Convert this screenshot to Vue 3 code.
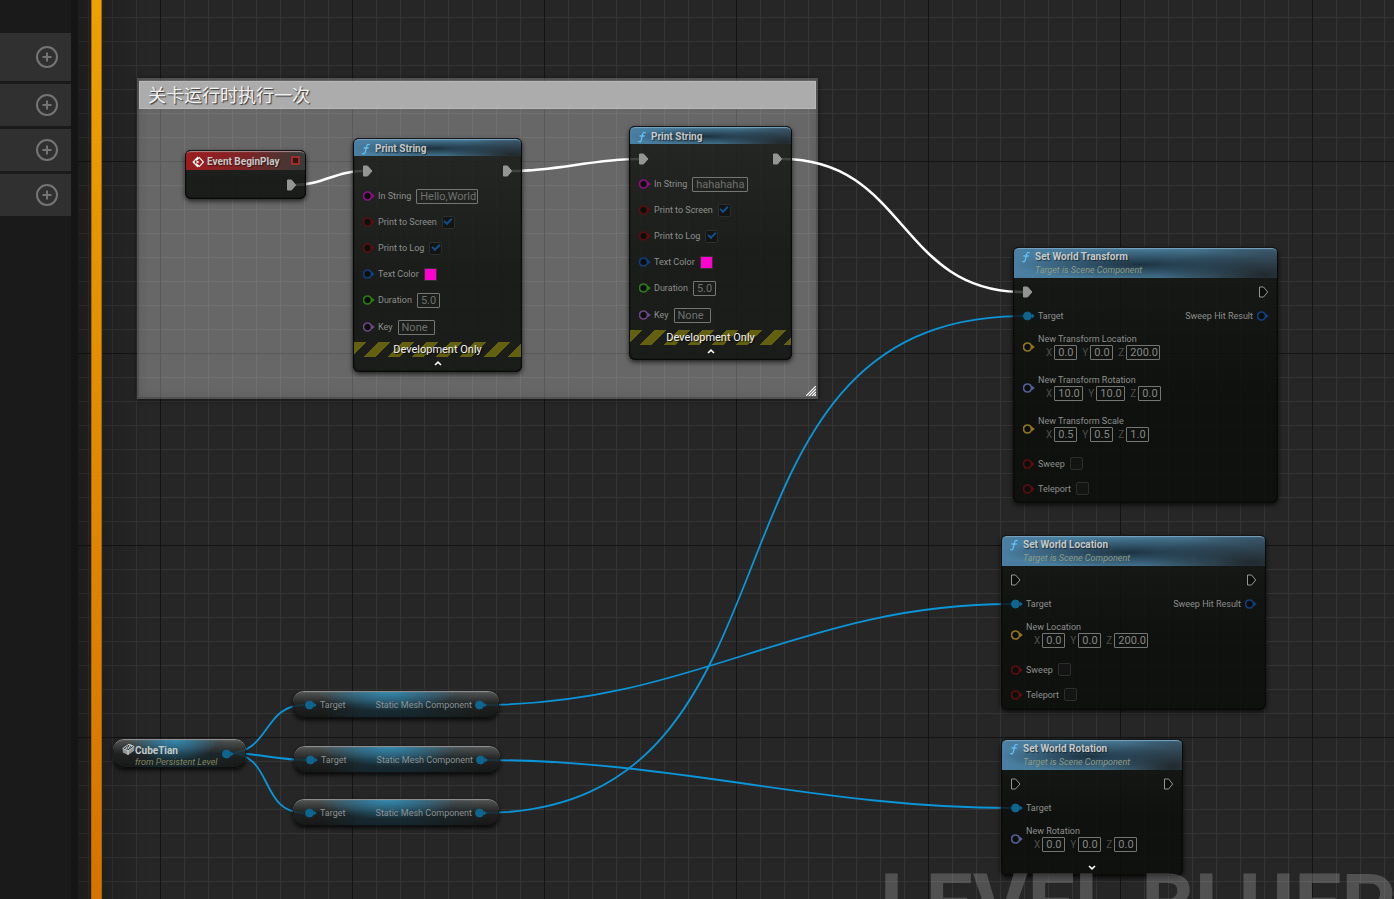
<script setup>
const wires = [
  { from: [295, 185], to: [363, 171], kind: 'exec' },
  { from: [512, 171], to: [639, 159], kind: 'exec' },
  { from: [782, 159], to: [1023, 292], kind: 'exec' },
  { from: [482, 705], to: [1011, 604], kind: 'object' },
  { from: [484, 760], to: [1011, 808], kind: 'object' },
  { from: [482, 813], to: [1023, 316], kind: 'object' },
  { from: [229, 753], to: [304, 705], kind: 'object' },
  { from: [229, 753], to: [306, 760], kind: 'object' },
  { from: [229, 753], to: [304, 813], kind: 'object' },
]

function wirePath({ from, to }) {
  const t = (Math.abs(to[0] - from[0]) + Math.abs(to[1] - from[1])) / 3
  return `M${from[0]} ${from[1]}C${from[0] + t} ${from[1]} ${to[0] - t} ${to[1]} ${to[0]} ${to[1]}`
}

const printRows = (text, width) => [
  { type: 'exec', in: 'linked', out: 'linked' },
  { type: 'text', label: 'In String', pin: 'string', value: text, width },
  { type: 'bool', label: 'Print to Screen', pin: 'bool', checked: true },
  { type: 'bool', label: 'Print to Log', pin: 'bool', checked: true },
  { type: 'color', label: 'Text Color', pin: 'struct' },
  { type: 'text', label: 'Duration', pin: 'float', value: '5.0', width: 23 },
  { type: 'text', label: 'Key', pin: 'name', value: 'None', width: 37, tall: true },
]

const vector = (label, pin, values) => ({ type: 'vector', label, pin, values })
const sweepRows = [
  { type: 'bool', label: 'Sweep', pin: 'bool' },
  { type: 'bool', label: 'Teleport', pin: 'bool' },
]

const nodes = [
  {
    id: 'begin', kind: 'event', x: 185, y: 150, w: 121, h: 49, title: 'Event BeginPlay',
    rows: [{ type: 'exec', out: 'linked' }],
  },
  {
    id: 'print1', kind: 'print', x: 353, y: 138, w: 169, h: 234, title: 'Print String',
    rows: printRows('Hello,World', 62), dev: true, caret: 'up',
  },
  {
    id: 'print2', kind: 'print', x: 629, y: 126, w: 163, h: 234, title: 'Print String',
    rows: printRows('hahahaha', 56), dev: true, caret: 'up',
  },
  {
    id: 'transform', kind: 'set', x: 1013, y: 247, w: 265, h: 256, title: 'Set World Transform',
    sub: 'Target is Scene Component',
    rows: [
      { type: 'exec', in: 'linked', out: 'open' },
      { type: 'target', label: 'Target', out: 'Sweep Hit Result' },
      vector('New Transform Location', 'vector', ['0.0', '0.0', '200.0']),
      vector('New Transform Rotation', 'rotator', ['10.0', '10.0', '0.0']),
      vector('New Transform Scale', 'vector', ['0.5', '0.5', '1.0']),
      ...sweepRows,
    ],
  },
  {
    id: 'location', kind: 'set', x: 1001, y: 535, w: 265, h: 175, title: 'Set World Location',
    sub: 'Target is Scene Component',
    rows: [
      { type: 'exec', in: 'open', out: 'open' },
      { type: 'target', label: 'Target', out: 'Sweep Hit Result' },
      vector('New Location', 'vector', ['0.0', '0.0', '200.0']),
      ...sweepRows,
    ],
  },
  {
    id: 'rotation', kind: 'set', x: 1001, y: 739, w: 182, h: 137, title: 'Set World Rotation',
    sub: 'Target is Scene Component',
    rows: [
      { type: 'exec', in: 'open', out: 'open' },
      { type: 'target', label: 'Target' },
      vector('New Rotation', 'rotator', ['0.0', '0.0', '0.0']),
    ],
    caret: 'down',
  },
]

const getters = [
  { x: 293, y: 691 },
  { x: 294, y: 746 },
  { x: 293, y: 799 },
]

const fieldWidth = (v) => ({ 3: 23, 4: 29, 5: 34 })[v.length]
const box = (n) => ({ left: n.x + 'px', top: n.y + 'px', width: n.w && n.w + 'px', minHeight: n.h && n.h + 'px' })
</script>

<template>
  <div class="editor">
    <main class="graph">
      <section class="comment" aria-label="关卡运行时执行一次">
        <h2>关卡运行时执行一次</h2>
        <svg class="grip" width="10" height="10" viewBox="0 0 10 10">
          <path d="M0 10 10 0M3 10l7-7M6 10l4-4M8.500 10 10 8.500" stroke="#fff" stroke-width="1.200" />
        </svg>
      </section>

      <svg class="wires">
        <path v-for="(w, i) in wires" :key="i" :d="wirePath(w)" :class="w.kind" />
      </svg>

      <article v-for="n in nodes" :key="n.id" class="node" :class="n.kind" :style="box(n)">
        <header>
          <svg v-if="n.kind === 'event'" class="glyph" width="12" height="12" viewBox="0 0 12 12">
            <path d="M5.600.6 7.300 2.300 5 4.500H2.800v3H5L7.300 9.700 5.600 11.400.3 6z" fill="#fff" />
            <path d="M7 1.200 11.400 6 7 10.800" fill="none" stroke="#eee" stroke-width="1.200" />
            <path d="M4.500 4.500 7.500 6l-3 1.500z" fill="#fff" />
          </svg>
          <svg v-else class="glyph" width="12" height="12" viewBox="0 0 12 12">
            <path d="M9.300 1.700C7.600.8 6.900 2 6.500 3.700L5.300 8.800C4.900 10.600 4 11.200 2.600 10.500M3.900 5h4.300" fill="none" stroke="#63bff0" stroke-width="1.300" stroke-linecap="round" />
          </svg>
          <div class="titles">
            <h3>{{ n.title }}</h3>
            <p v-if="n.sub">{{ n.sub }}</p>
          </div>
          <span v-if="n.kind === 'event'" class="delegate"></span>
        </header>

        <div class="body">
          <div v-for="(r, i) in n.rows" :key="i" class="row" :class="[r.type, { tall: r.tall }]">
            <template v-if="r.type === 'exec'">
              <svg v-if="r.in" class="pin" :class="r.in" width="12" height="12" viewBox="0 0 12 12">
                <path d="M.5 1h4L9 6 4.500 11h-4z" />
              </svg>
              <svg v-if="r.out" class="pin end" :class="r.out" width="9" height="12" viewBox="0 0 9 12">
                <path d="M.5 1h4L8.700 6 4.500 11h-4z" />
              </svg>
            </template>

            <template v-else>
              <svg class="pin" :class="r.pin || 'object'" width="12" height="12" viewBox="0 0 12 12">
                <circle cx="4.500" cy="6" r="4" />
                <path class="nub" d="M9 3.800 11.800 6 9 8.200z" />
              </svg>

              <template v-if="r.type === 'vector'">
                <fieldset>
                  <legend>{{ r.label }}</legend>
                  <div class="axes">
                    <label v-for="(v, k) in r.values" :key="k">
                      <span>{{ 'XYZ'[k] }}</span>
                      <input type="text" :value="v" :style="{ width: fieldWidth(v) + 'px' }" />
                    </label>
                  </div>
                </fieldset>
              </template>

              <template v-else-if="r.type === 'target'">
                <span>{{ r.label }}</span>
                <template v-if="r.out">
                  <span class="end">{{ r.out }}</span>
                  <svg class="pin struct" width="12" height="12" viewBox="0 0 12 12">
                    <circle cx="4.500" cy="6" r="4" />
                    <path class="nub" d="M9 3.800 11.800 6 9 8.200z" />
                  </svg>
                </template>
              </template>

              <template v-else>
                <label :for="n.id + i">{{ r.label }}</label>
                <input v-if="r.type === 'text'" :id="n.id + i" type="text" :value="r.value" :style="{ width: r.width + 'px' }" />
                <input v-else-if="r.type === 'bool'" :id="n.id + i" type="checkbox" :checked="r.checked" />
                <button v-else :id="n.id + i" type="button" class="swatch"></button>
              </template>
            </template>
          </div>
        </div>

        <p v-if="n.dev" class="dev">Development Only</p>
        <button v-if="n.caret" type="button" class="caret" :class="n.caret" aria-label="Toggle advanced pins">
          <svg width="8" height="5" viewBox="0 0 8 5">
            <path d="M1 4 4 1.200 7 4" fill="none" stroke="#fff" stroke-width="1.600" />
          </svg>
        </button>
      </article>

      <article class="pill variable" :style="box({ x: 113, y: 739 })">
        <svg class="brick" width="13" height="13" viewBox="0 0 13 13">
          <path d="M.8 5.500 7 1.200l5.200 2.300v4.200L6 12 .8 9.500z" fill="#8f9494" />
          <path d="M.8 5.500 7 1.200l5.200 2.300L6 7.800z" fill="#1d282c" stroke="#c6caca" stroke-width="1" />
          <path d="M6 7.800V12M3.600 5.300l2-1.300 1.800.8-2 1.300zM6.800 3.200l1.400-.9 1.800.8-1.500 1z" fill="none" stroke="#d5d8d8" stroke-width=".9" />
        </svg>
        <div class="titles">
          <h3>CubeTian</h3>
          <p>from Persistent Level</p>
        </div>
        <svg class="pin object" width="12" height="12" viewBox="0 0 12 12">
          <circle cx="4.500" cy="6" r="4" />
          <path class="nub" d="M9 3.800 11.800 6 9 8.200z" />
        </svg>
      </article>

      <article v-for="(g, i) in getters" :key="i" class="pill getter" :style="box(g)">
        <svg class="pin object" width="12" height="12" viewBox="0 0 12 12">
          <circle cx="4.500" cy="6" r="4" />
          <path class="nub" d="M9 3.800 11.800 6 9 8.200z" />
        </svg>
        <span>Target</span>
        <span class="end">Static Mesh Component</span>
        <svg class="pin object" width="12" height="12" viewBox="0 0 12 12">
          <circle cx="4.500" cy="6" r="4" />
          <path class="nub" d="M9 3.800 11.800 6 9 8.200z" />
        </svg>
      </article>

      <div class="watermark">LEVEL BLUEPRINT</div>
      <div class="rail"></div>
    </main>

    <aside>
      <div v-for="k in 4" :key="k" class="group">
        <button type="button" aria-label="Add">
          <svg width="24" height="24" viewBox="0 0 24 24">
            <circle cx="12" cy="12" r="10" />
            <path d="M12 7.500v9M7.500 12h9" />
          </svg>
        </button>
      </div>
    </aside>
  </div>
</template>

<style>
body {
  margin: 0;
  background: #262626;
}
</style>

<style scoped>
.editor {
  display: grid;
  height: 100vh;
  overflow: hidden;
  font-family: Roboto, "Noto Sans CJK SC", sans-serif;
  font-size: 9px;
  line-height: 12px;
  color: #8d8f8d;
}
.editor > * {
  grid-area: 1 / 1;
}
h2, h3, p {
  margin: 0;
}
button {
  padding: 0;
  border: 0;
  background: none;
}

/* side panel */
aside {
  z-index: 2;
  justify-self: start;
  box-sizing: border-box;
  width: 78px;
  padding-top: 33px;
  background: linear-gradient(90deg, #1a1a1a 71px, #151515 71px);
  display: flex;
  flex-direction: column;
  gap: 3px;
}
.group {
  width: 71px;
  height: 42px;
  background: #303030;
  display: flex;
  align-items: center;
  justify-content: flex-end;
}
.group:first-child {
  height: 48px;
}
.group button {
  width: 24px;
  height: 24px;
  margin-right: 12px;
}
.group svg {
  display: block;
  fill: none;
  stroke: #747474;
  stroke-width: 2;
}

/* graph canvas */
.graph {
  position: relative;
  overflow: hidden;
  background-color: #262626;
  background-image:
    linear-gradient(90deg, rgba(0, 0, 0, 0.25) 78px, transparent 150px),
    linear-gradient(90deg, #141414 1px, transparent 1px),
    linear-gradient(#141414 1px, transparent 1px),
    linear-gradient(90deg, #343434 1px, transparent 1px),
    linear-gradient(#343434 1px, transparent 1px);
  background-size: auto, 192px 192px, 192px 192px, 24px 24px, 24px 24px;
  background-position: 0 0, 160px 0, 0 161px, 16px 0, 0 17px;
}
.rail {
  position: absolute;
  inset: 0 auto 0 91px;
  width: 9px;
  border: 1px solid #a06a08;
  border-width: 0 1px;
  background: linear-gradient(#eda200, #d87200);
}
.comment {
  position: absolute;
  left: 137px;
  top: 78px;
  box-sizing: border-box;
  width: 681px;
  height: 321px;
  padding: 3px 2px;
  background: rgba(255, 255, 255, 0.3);
  box-shadow: inset 0 0 0 2px rgba(60, 60, 60, 0.4), inset 0 0 12px rgba(0, 0, 0, 0.15), 0 1px 5px rgba(0, 0, 0, 0.5);
}
.comment h2 {
  padding: 2px 9px 0;
  background: #acacac;
  box-shadow: inset 0 0 0 1px #b8b8b8;
  color: #f2f2f2;
  font-size: 18px;
  font-weight: 400;
  line-height: 26px;
  text-shadow: 1px 1px 1px #333;
}
.grip {
  position: absolute;
  right: 2px;
  bottom: 3px;
}
.wires {
  position: absolute;
  inset: 0;
  width: 100%;
  height: 100%;
  fill: none;
}
.wires .exec {
  stroke: #fff;
  stroke-width: 2.600;
}
.wires .object {
  stroke: #0a95d8;
  stroke-width: 1.800;
}
.watermark {
  position: absolute;
  left: 880px;
  top: 852px;
  color: rgba(255, 255, 255, 0.2);
  font-size: 84px;
  font-weight: 700;
  line-height: 106px;
  white-space: nowrap;
  pointer-events: none;
}

/* nodes */
.node {
  position: absolute;
  box-sizing: border-box;
  display: flex;
  flex-direction: column;
  border-radius: 6px;
  overflow: hidden;
  background: linear-gradient(rgba(20, 23, 19, 0.8), rgba(9, 12, 8, 0.82) 60%);
  box-shadow: inset 0 0 0 1px #0a0a0a, inset 0 0 0 2px rgba(0, 0, 0, 0.2), 0 2px 5px rgba(0, 0, 0, 0.7);
}
.node header {
  box-sizing: border-box;
  display: flex;
  align-items: flex-start;
  gap: 3px;
  height: 31px;
  margin: 0 1px;
  padding: 3px 0 0 6px;
  border-radius: 5px 5px 0 0;
  border-top: 1px solid #15181a;
  background:
    radial-gradient(ellipse 48% 50% at 48% 55%, rgba(22, 38, 50, 0.85), transparent),
    radial-gradient(ellipse 40% 100% at 95% 90%, rgba(32, 38, 42, 0.95), transparent),
    linear-gradient(90deg, #4a7fa2, #467894 50%, #3c5f75);
  box-shadow: inset 0 2px 1px -1px #79a5c0;
}
.node.print header {
  height: 18px;
  padding-top: 4px;
}
.node.event header {
  height: 20px;
  padding-top: 5px;
  background: linear-gradient(90deg, #9c1c1f, #7e2426 50%, #3a3a38 95%);
  box-shadow: inset 0 2px 1px -1px #a88;
}
h3 {
  font-size: 10px;
  font-weight: 700;
  line-height: 12px;
  color: #c6c9c9;
  white-space: nowrap;
}
.node h3 {
  text-shadow: 1px 1px 1px rgba(0, 0, 0, 0.5);
}
.titles p {
  font-size: 9px;
  font-style: italic;
  line-height: 14px;
  color: #8c9c86;
  white-space: nowrap;
}
.delegate {
  width: 5px;
  height: 5px;
  margin: 0 5px 0 auto;
  border: 2px solid #a02c2e;
  border-radius: 1px;
  background: #3c1213;
}
.body {
  padding: 2px 10px 0;
}
.row {
  display: flex;
  align-items: center;
  height: 26px;
  gap: 5px;
  white-space: nowrap;
}
.row .pin {
  margin-right: -2px;
}
.row .end {
  margin-left: auto;
}
.row .pin.end {
  margin-right: 0;
}
.row.target .end + .pin {
  margin: 0 -1px 0 -1px;
}
.row.exec {
  height: 25px;
}
.row.tall {
  height: 28px;
}
.event .row.exec {
  height: 27px;
}
.event .body {
  padding-top: 1px;
}
.set .row {
  height: 25px;
}
.set .row.exec,
.set .row.target {
  height: 24px;
}
.set .row.vector {
  box-sizing: border-box;
  height: 41px;
  padding: 4px 0 8px;
}
fieldset {
  margin: 0;
  padding: 0;
  border: 0;
  min-width: 0;
}
legend {
  padding: 0;
}
.axes {
  display: flex;
  gap: 5px;
  padding-left: 8px;
}
.axes label {
  display: flex;
  align-items: center;
  gap: 2px;
  color: #4c4e4c;
  font-size: 10px;
}
input[type="text"] {
  box-sizing: border-box;
  height: 15px;
  margin: 0;
  padding: 0 1px 0 3px;
  border: 1px solid #747674;
  border-radius: 1px;
  background: transparent;
  color: #858785;
  font: 400 11px/13px Roboto, sans-serif;
}
.print input[type="text"] {
  color: #6f716f;
}
input[type="checkbox"] {
  appearance: none;
  box-sizing: border-box;
  width: 13px;
  height: 13px;
  margin: 0;
  border: 1px solid #2c2e2c;
  border-radius: 2px;
  background: #131413;
  display: grid;
  place-items: center;
}
input[type="checkbox"]:checked::before {
  content: "";
  width: 6px;
  height: 3px;
  margin-top: -3px;
  border: solid #11508f;
  border-width: 0 0 2px 2px;
  rotate: -45deg;
}
.swatch {
  width: 13px;
  height: 13px;
  border: 1px solid #333;
  background: #ff00d0;
}
.pin {
  flex: none;
  fill: #0c0e0c;
  stroke-width: 1.700;
}
.pin .nub {
  stroke: none;
}
.pin.linked { fill: #949694; stroke: #949694; stroke-width: 1; }
.pin.open { stroke: #949694; stroke-width: 1; }
.pin.string { stroke: #8b1180; }
.pin.string .nub { fill: #8b1180; }
.pin.bool { stroke: #5c0e0e; }
.pin.bool .nub { fill: #5c0e0e; }
.pin.struct { stroke: #0f3f80; }
.pin.struct .nub { fill: #0f3f80; }
.pin.float { stroke: #2c7d14; }
.pin.float .nub { fill: #2c7d14; }
.pin.name { stroke: #6a4582; }
.pin.name .nub { fill: #6a4582; }
.pin.vector { stroke: #93761c; }
.pin.vector .nub { fill: #93761c; }
.pin.rotator { stroke: #535f95; }
.pin.rotator .nub { fill: #535f95; }
.pin.object { fill: #0e658f; stroke: #0e658f; stroke-width: 1; }

.dev {
  margin: 1px 1px 0;
  padding-top: 1px;
  font-size: 11px;
  line-height: 14px;
  text-align: center;
  color: #f2f2f2;
  text-shadow: 1px 1px 1px #000;
  background: repeating-linear-gradient(135deg, #63610f 0 9px, #1b1d1a 9px 17px);
}
.caret {
  align-self: center;
  height: 11px;
  display: flex;
  align-items: center;
}
.caret.down svg {
  rotate: 180deg;
}
.caret.up {
  padding-top: 1px;
}
.caret.down {
  margin-top: 1px;
}

/* compact nodes */
.pill {
  position: absolute;
  box-sizing: border-box;
  display: flex;
  align-items: center;
  border-radius: 11px;
  white-space: nowrap;
  background:
    radial-gradient(ellipse 34% 75% at 46% 0, rgba(50, 150, 195, 0.85), transparent),
    linear-gradient(90deg, transparent 15%, rgba(18, 62, 86, 0.35) 35% 55%, transparent 90%),
    linear-gradient(rgba(95, 97, 97, 0.85), rgba(30, 34, 32, 0.85) 50%, rgba(20, 22, 20, 0.85));
  box-shadow: inset 0 1px 1px #999, inset 0 0 0 1px rgba(10, 10, 10, 0.7), 0 2px 4px rgba(0, 0, 0, 0.8);
}
.getter {
  width: 206px;
  height: 27px;
  padding: 0 12px;
  color: #8c9294;
}
.getter .pin + span {
  margin-left: 3px;
}
.getter .end {
  margin: 0 3px 0 auto;
}
.variable {
  width: 133px;
  height: 29px;
  padding: 0 12px 0 9px;
}
.brick {
  align-self: flex-start;
  margin-top: 4px;
}
.variable .titles {
  padding-top: 5px;
}
.variable .titles p {
  line-height: 11px;
  color: #85855c;
}
.variable .pin {
  margin-left: auto;
}
</style>
